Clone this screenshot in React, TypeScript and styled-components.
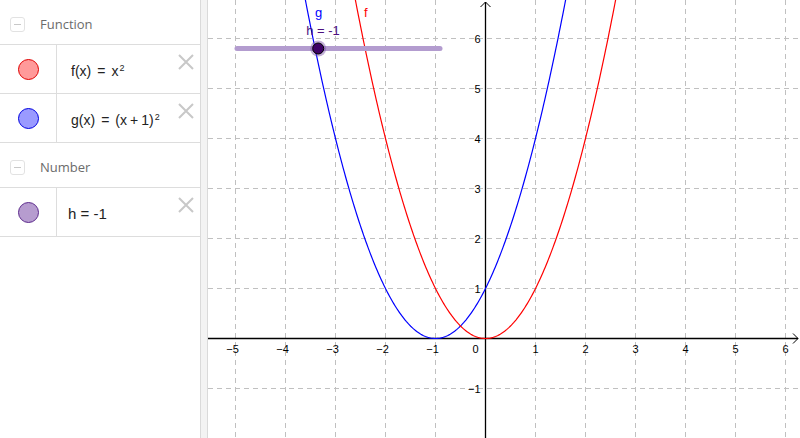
import React from "react";
import styled, { createGlobalStyle } from "styled-components";

const GlobalStyle = createGlobalStyle`
    html, body {
        margin: 0;
        padding: 0;
        background: #fff;
    }
    body {
        font-family: "Open Sans", "Liberation Sans", sans-serif;
    }
`;

// graphics view geometry (svg coords)
const W = 592;
const H = 438;
const OX = 277.5;
const OY = 338.5;
const UNIT = 50;

const toX = (x: number) => OX + x * UNIT;
const toY = (y: number) => OY - y * UNIT;

const curve = (fn: (x: number) => number, from: number, to: number) => {
    const pts: string[] = [];
    const steps = 240;
    for (let i = 0; i <= steps; i++) {
        const x = from + ((to - from) * i) / steps;
        pts.push(`${i === 0 ? "M" : "L"}${toX(x).toFixed(2)},${toY(fn(x)).toFixed(2)}`);
    }
    return pts.join(" ");
};

type Item = {
    id: string;
    fill: string;
    stroke: string;
    formula: () => React.ReactNode;
};

const groups: { title: string; items: Item[] }[] = [
    {
        title: "Function",
        items: [
            {
                id: "f",
                fill: "#ff9a9a",
                stroke: "#e00000",
                formula: () => <>f(x)<Eq>=</Eq>x<Sup>2</Sup></>,
            },
            {
                id: "g",
                fill: "#9a9aff",
                stroke: "#0000e0",
                formula: () => <>g(x)<Eq>=</Eq>(x<Op>+</Op>1)<Sup>2</Sup></>,
            },
        ],
    },
    {
        title: "Number",
        items: [
            {
                id: "h",
                fill: "#b69ccf",
                stroke: "#5c2a8c",
                formula: () => <BigText>h = -1</BigText>,
            },
        ],
    },
];

const App: React.FC = () => (
    <>
        <GlobalStyle />
        <Page>
            <AlgebraView>
                {groups.map((group) => (
                    <React.Fragment key={group.title}>
                        <GroupHeader>
                            <Toggle />
                            <GroupTitle>{group.title}</GroupTitle>
                        </GroupHeader>
                        {group.items.map((item) => (
                            <ItemRow key={item.id}>
                                <MarbleCell>
                                    <Marble $fill={item.fill} $stroke={item.stroke} />
                                </MarbleCell>
                                <Formula>{item.formula()}</Formula>
                                <CloseButton>
                                    <svg width="16" height="16" viewBox="0 0 16 16">
                                        <path d="M1 1 L15 15 M15 1 L1 15" stroke="#c8c8c8" strokeWidth="2" />
                                    </svg>
                                </CloseButton>
                            </ItemRow>
                        ))}
                    </React.Fragment>
                ))}
            </AlgebraView>
            <Divider />
            <GraphicsView>
                <Graph />
            </GraphicsView>
        </Page>
    </>
);

const Graph: React.FC = () => {
    const xs = [-5, -4, -3, -2, -1, 1, 2, 3, 4, 5, 6];
    const vx: number[] = [];
    for (let k = -6; k <= 6; k++) if (k !== 0 && toX(k) > 0 && toX(k) < W) vx.push(k);
    const hy = [-1, 1, 2, 3, 4, 5, 6];
    const minus = (n: number) => (n < 0 ? `\u2212${-n}` : `${n}`);

    // slider h in [-5, 5]
    const sx0 = 29;
    const sx1 = 232;
    const hx = sx0 + ((-1 + 5) / 10) * (sx1 - sx0);

    return (
        <svg width={W} height={H} viewBox={`0 0 ${W} ${H}`}>
            <g stroke="#c0c0c0" strokeWidth="1" strokeDasharray="5 4">
                {vx.map((k) => (
                    <line key={`v${k}`} x1={toX(k)} y1={0} x2={toX(k)} y2={H} />
                ))}
                {hy.map((k) => (
                    <line key={`h${k}`} x1={0} y1={toY(k)} x2={W} y2={toY(k)} />
                ))}
            </g>

            <g stroke="#000" strokeWidth="1.3" fill="none">
                <line x1={0} y1={OY} x2={W - 2} y2={OY} />
                <path d={`M${W - 7},${OY - 5} L${W - 2},${OY} L${W - 7},${OY + 5}`} strokeWidth="1" />
                <line x1={OX} y1={2} x2={OX} y2={H} />
                <path d={`M${OX - 5},7 L${OX},2 L${OX + 5},7`} strokeWidth="1" />
            </g>

            <g fontFamily='"Liberation Sans", Arial, sans-serif' fontSize="11" fill="#000">
                {xs.map((k) => (
                    <text key={`xl${k}`} x={toX(k) + (k < 0 ? -3 : 0)} y={OY + 14} textAnchor="middle">
                        {minus(k)}
                    </text>
                ))}
                <text x={OX - 10} y={OY + 14} textAnchor="middle">0</text>
                {hy.map((k) => (
                    <text key={`yl${k}`} x={OX - 5} y={toY(k) + 4} textAnchor="end">
                        {minus(k)}
                    </text>
                ))}
            </g>

            <path d={curve((x) => (x + 1) ** 2, -3.7, 1.7)} stroke="#0000ff" strokeWidth="1.2" fill="none" />
            <path d={curve((x) => x ** 2, -2.7, 2.7)} stroke="#ff0000" strokeWidth="1.2" fill="none" />

            <g fontFamily='"Liberation Sans", Arial, sans-serif' fontSize="13">
                <text x={107} y={17} fill="#0000ff">g</text>
                <text x={156} y={17} fill="#ff0000">f</text>
                <text x={115} y={35} fill="#4c1080" textAnchor="middle">h = -1</text>
            </g>

            <line x1={sx0} y1={48.5} x2={sx1} y2={48.5} stroke="#b39ccf" strokeWidth="5" strokeLinecap="round" />
            <circle cx={hx} cy={48.5} r={8} fill="#7a4fa8" opacity="0.45" />
            <circle cx={hx} cy={48.5} r={5.5} fill="#3d0066" stroke="#000" strokeWidth="1" />
        </svg>
    );
};

const Page = styled.div`
    display: flex;
    width: 800px;
    height: 438px;
    overflow: hidden;
    background: #fff;
`;

const AlgebraView = styled.div`
    width: 200px;
    flex-shrink: 0;
    display: flex;
    flex-direction: column;
`;

const GroupHeader = styled.div`
    height: 45px;
    box-sizing: border-box;
    display: flex;
    align-items: center;
    padding-left: 10px;
    padding-top: 4px;
    border-bottom: 1px solid #dddddd;
`;

const Toggle = styled.div`
    position: relative;
    width: 15px;
    height: 15px;
    box-sizing: border-box;
    border: 1px solid #e2e2e2;
    border-radius: 3px;
    margin-right: 15px;

    &::after {
        content: "";
        position: absolute;
        left: 3px;
        right: 3px;
        top: 6px;
        height: 1.5px;
        background: #c8c8c8;
    }
`;

const GroupTitle = styled.span`
    font-size: 13px;
    color: #6b6b6b;
    user-select: none;
`;

const ItemRow = styled.div`
    height: 49px;
    box-sizing: border-box;
    display: flex;
    border-bottom: 1px solid #dddddd;
`;

const MarbleCell = styled.div`
    width: 56px;
    flex-shrink: 0;
    display: flex;
    align-items: center;
    justify-content: center;
    border-right: 1px solid #dddddd;
`;

const Marble = styled.div<{ $fill: string; $stroke: string }>`
    width: 19px;
    height: 19px;
    border-radius: 50%;
    background: ${(p) => p.$fill};
    border: 1px solid ${(p) => p.$stroke};
`;

const Formula = styled.div`
    flex: 1;
    display: flex;
    align-items: center;
    padding-left: 14px;
    padding-top: 3px;
    font-family: "Liberation Sans", Arial, sans-serif;
    font-size: 14px;
    color: #222;
    white-space: nowrap;
`;

const Eq = styled.span`
    margin: 0 6px;
`;

const Op = styled.span`
    margin: 0 3px;
`;

const Sup = styled.sup`
    font-size: 9px;
    position: relative;
    top: -3px;
    margin-left: 1px;
`;

const BigText = styled.span`
    font-size: 15px;
    margin-left: -3px;
`;

const CloseButton = styled.div`
    width: 16px;
    height: 16px;
    margin: 8px 6px 0 0;
    flex-shrink: 0;
`;

const Divider = styled.div`
    width: 8px;
    flex-shrink: 0;
    box-sizing: border-box;
    background: #f3f3f3;
    border-left: 1px solid #dadada;
    border-right: 1px solid #dadada;
`;

const GraphicsView = styled.div`
    flex: 1;
    display: flex;
`;

export default App;
